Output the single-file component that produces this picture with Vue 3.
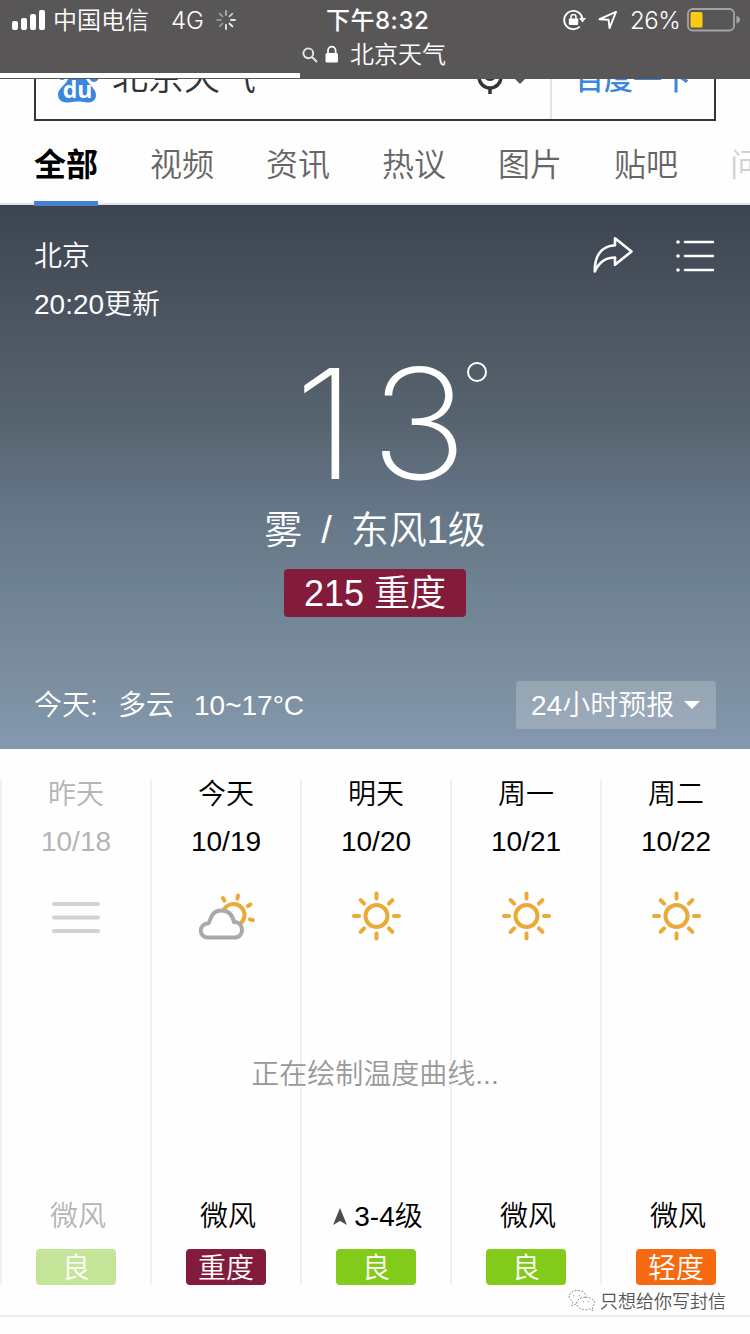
<template>
  <div class="page">
    <header class="chrome">
      <div class="status">
        <svg class="signal" viewBox="0 0 34 22">
          <rect x="0" y="12" width="6" height="9" rx="2" />
          <rect x="9" y="9" width="6" height="12" rx="2" />
          <rect x="18" y="5" width="6" height="16" rx="2" />
          <rect x="27" y="1" width="6" height="20" rx="2" />
        </svg>
        <span class="carrier">中国电信</span>
        <span class="network">4G</span>
        <svg class="spinner" viewBox="-11 -11 22 22">
          <line
            v-for="(o, i) in spokes"
            :key="i"
            x1="0" y1="-5" x2="0" y2="-9"
            :transform="'rotate(' + i * 45 + ')'"
            :stroke-opacity="o"
          />
        </svg>
        <span class="clock">下午8:32</span>
        <svg class="rotation" viewBox="0 0 24 24">
          <path d="M17.8 18.6A9.2 9.2 0 1 1 20.4 10.5" fill="none" stroke="#fff" stroke-width="1.8" />
          <path d="M17 10h7l-3.5 4.5z" fill="#fff" />
          <rect x="6.8" y="10.5" width="9.4" height="6.5" rx="1" fill="#fff" />
          <path d="M9 11V9a2.5 2.5 0 0 1 5 0v2" fill="none" stroke="#fff" stroke-width="1.5" />
        </svg>
        <svg class="location" viewBox="0 0 20 20">
          <path d="M1.5 9.2L18 1.8 11.5 18.2 10.6 9.8z" fill="none" stroke="#fff" stroke-width="1.9" stroke-linejoin="round" />
        </svg>
        <span class="percent">26%</span>
        <svg class="battery" viewBox="0 0 54 24">
          <rect x="1" y="1" width="46" height="21.5" rx="4.5" fill="none" stroke="#a5a4a5" stroke-width="1.8" />
          <rect x="3.5" y="4" width="12" height="15.5" rx="1.5" fill="#fbcb12" />
          <path d="M49.5 8q3.5 1 3.5 3.8t-3.5 3.8z" fill="#a5a4a5" />
        </svg>
      </div>
      <div class="address">
        <svg class="glass" viewBox="0 0 16 16">
          <circle cx="6.3" cy="6.3" r="4.9" />
          <path d="M10 10l5 5" />
        </svg>
        <svg class="lock" viewBox="0 0 14 18">
          <rect x="0.5" y="8" width="12.5" height="9.5" rx="1.5" fill="#fff" />
          <path d="M3 9V5.5a3.8 3.8 0 0 1 7.6 0V9" fill="none" stroke="#fff" stroke-width="1.7" />
        </svg>
        <span>北京天气</span>
      </div>
      <div class="progress"></div>
    </header>

    <div class="search-clip">
      <div class="search">
        <svg class="paw" viewBox="0 0 44 44">
          <ellipse cx="5" cy="14" rx="4.6" ry="6" />
          <ellipse cx="15" cy="7" rx="4.6" ry="6.5" />
          <ellipse cx="27" cy="7" rx="4.6" ry="6.5" />
          <ellipse cx="37" cy="16" rx="5" ry="6" />
          <path d="M20 11c6 0 8 7 11 11s8 8 8 13-4 8-9 7.5-6-1-10-1-5 1-9 1-10-1-10-8c0-5 5-8 8-12s5-11.500 11-11.500z" />
          <text x="20.5" y="38">du</text>
        </svg>
        <span class="query">北京天气</span>
        <svg class="mic" viewBox="0 0 52 40">
          <rect x="9" y="-4" width="14" height="25" rx="7" fill="#333539" />
          <path d="M5 15v2a11 11 0 0 0 22 0v-2" fill="none" stroke="#333539" stroke-width="3.5" />
          <path d="M16 28v6" stroke="#333539" stroke-width="3.5" />
          <path d="M37 15h18l-9 9z" fill="#555" />
        </svg>
        <div class="submit">百度一下</div>
      </div>
    </div>

    <nav class="tabs">
      <span v-for="(t, i) in tabs" :key="t" class="tab" :class="{ active: i === 0, faded: i === 6 }">{{ t }}</span>
    </nav>

    <section class="now">
      <div class="now-head">
        <div class="place">
          <div>北京</div>
          <div>20:20更新</div>
        </div>
        <svg class="share" viewBox="0 0 40 38">
          <path d="M22 2.2L38.5 15.5 22 28.8V21.5C12 21.5 6 26 1.8 35.5 1.5 19 9 10 22 9.2z" />
        </svg>
        <svg class="list" viewBox="0 0 38 34">
          <g v-for="y in [3, 17, 31]" :key="y">
            <circle cx="2" :cy="y" r="1.8" fill="#fff" />
            <path :d="'M9 ' + y + 'H37'" stroke="#fff" stroke-width="2.6" stroke-linecap="round" />
          </g>
        </svg>
      </div>
      <div class="temp"><span class="digits">13</span><i class="degree"></i></div>
      <div class="condition"><span>雾</span><span>/</span><span>东风1级</span></div>
      <div class="aqi">215 重度</div>
      <div class="today">
        <span class="label">今天:</span>
        <span class="sky">多云</span>
        <span>10~17°C</span>
        <div class="hourly">24小时预报<i class="caret"></i></div>
      </div>
    </section>

    <section class="forecast">
      <div v-for="d in days" :key="d.date" class="day" :class="{ past: d.past }">
        <div class="name">{{ d.name }}</div>
        <div class="date">{{ d.date }}</div>
        <svg v-if="d.icon === 'fog'" class="icon" viewBox="-30 -30 60 60">
          <path d="M-22 -13H22M-22 0.5H22M-22 14H22" stroke="#d2d1d3" stroke-width="4" stroke-linecap="round" />
        </svg>
        <svg v-else-if="d.icon === 'cloudy'" class="icon" viewBox="-30 -30 60 60">
          <g transform="translate(7.5 -2) rotate(13)" stroke="#eba937" stroke-width="4" stroke-linecap="round" fill="none">
            <circle r="11" />
            <path v-for="a in [-45, 0, 45, 92]" :key="a" d="M0 -17V-20" :transform="'rotate(' + a + ')'" />
          </g>
          <path d="M-18.500 20.500a7 7 0 0 1 0.500 -14C-15.500 6 -16 -6.500 -5 -6.500 2 -6.500 6.500 -2 8 5 18.500 5 18.500 20.500 9 20.500z" fill="#fff" stroke="#a9a8ac" stroke-width="4" stroke-linejoin="round" />
        </svg>
        <svg v-else class="icon" viewBox="-30 -30 60 60">
          <g stroke="#eba937" stroke-width="4" stroke-linecap="round" fill="none">
            <circle cx="0.5" cy="-1" r="11" />
            <path v-for="n in 8" :key="n" d="M0 -17.5V-22.5" :transform="'translate(0.5 -1) rotate(' + n * 45 + ')'" />
          </g>
        </svg>
        <div class="wind">
          <svg v-if="d.arrow" class="arrow" viewBox="0 0 14 17"><path d="M7 0l7 17-7-4-7 4z" fill="#4c4c4e" /></svg>
          {{ d.wind }}
        </div>
        <div class="badge" :class="d.level">{{ d.quality }}</div>
      </div>
      <div class="drawing">正在绘制温度曲线...</div>
    </section>

    <footer class="foot">
      <div class="watermark">
        <svg viewBox="0 0 30 26">
          <path d="M9 15l-4 2 1-4C-2 7 4 1 11 1c5 0 8 3 9 6" />
          <path d="M19 8c-12 0-12 13 0 13 2 0 3 0 4-1l4 2-1-4c6-5 0-10-7-10z" />
          <path d="M7 6v1M13 6v1M17 12v1M22 12v1" />
        </svg>
        <span>只想给你写封信</span>
      </div>
    </footer>
  </div>
</template>

<script setup>
const spokes = [0.55, 0.7, 0.85, 1, 0.9, 0.4, 0.35, 0.45]

const tabs = ['全部', '视频', '资讯', '热议', '图片', '贴吧', '问答']

const days = [
  { name: '昨天', date: '10/18', icon: 'fog', wind: '微风', quality: '良', level: 'good', past: true },
  { name: '今天', date: '10/19', icon: 'cloudy', wind: '微风', quality: '重度', level: 'heavy' },
  { name: '明天', date: '10/20', icon: 'sunny', wind: '3-4级', arrow: true, quality: '良', level: 'good' },
  { name: '周一', date: '10/21', icon: 'sunny', wind: '微风', quality: '良', level: 'good' },
  { name: '周二', date: '10/22', icon: 'sunny', wind: '微风', quality: '轻度', level: 'light' }
]
</script>

<style>
body { margin: 0; background: #fff; }
</style>

<style scoped>
.page { width: 750px; height: 1334px; overflow: hidden; background: #fefefe; font-family: "Liberation Sans", "Noto Sans CJK SC", sans-serif; font-weight: 350; color: #000; }
.page svg { display: block; flex-shrink: 0; }

.chrome { height: 79px; background: #585657; color: #fff; font-family: Inter, "Noto Sans CJK SC", sans-serif; display: flex; flex-direction: column; }
.status { height: 40px; display: flex; align-items: center; font-size: 24px; line-height: 40px; padding-left: 12px; box-sizing: border-box; white-space: nowrap; }
.status span { padding-top: 2px; }
.signal { width: 34px; height: 22px; fill: #fff; }
.carrier { margin-left: 7px; width: 118px; }
.network { width: 44px; }
.spinner { width: 22px; height: 22px; stroke: #fff; stroke-width: 1.8; stroke-linecap: round; }
.clock { margin-left: 89px; width: 236px; font-weight: 500; letter-spacing: 0.5px; }
.rotation { width: 24px; height: 24px; }
.location { width: 20px; height: 20px; margin-left: 12px; }
.percent { margin-left: 12px; width: 57px; letter-spacing: -0.4px; }
.battery { width: 54px; height: 24px; }
.address { height: 29px; padding-bottom: 4px; display: flex; align-items: center; padding-left: 302px; font-size: 24px; line-height: 28px; }
.address span { margin-left: 11px; }
.glass { width: 16px; height: 16px; fill: none; stroke: #e8e8e8; stroke-width: 1.9; }
.lock { width: 14px; height: 18px; margin-left: 7px; margin-top: -2px; }
.progress { width: 300px; height: 5px; background: #fff; }

.search-clip { height: 42px; padding: 0 34px; display: flex; align-items: flex-end; overflow: hidden; }
.search { flex: 1; height: 82px; box-sizing: border-box; border: 2px solid #333539; display: flex; align-items: center; }
.paw { width: 44px; height: 44px; margin: 4px 0 0 21px; fill: #3a86e0; }
.paw text { fill: #fff; font: bold 23px "Open Sans", sans-serif; text-anchor: middle; }
.query { margin: 0 0 12px 11px; width: 362px; font-size: 36px; color: #333; }
.mic { width: 52px; height: 40px; }
.submit { margin-left: auto; width: 164px; height: 78px; line-height: 79px; box-sizing: border-box; border-left: 2px solid #e4e4e6; text-align: center; font-size: 29px; font-weight: 500; color: #3a86e0; }

.tabs { height: 84px; box-sizing: border-box; padding-left: 34px; border-bottom: 2px solid #e1e3e8; display: flex; gap: 52px; }
.tab { flex-shrink: 0; width: 64px; height: 80px; line-height: 88px; font-size: 32px; color: #666; }
.tab.active { position: relative; color: #000; font-weight: 700; border-bottom: 5px solid #4583cb; }
.tab.faded { color: #d0d0d0; }

.now { height: 544px; box-sizing: border-box; padding: 28px 34px 0; background: linear-gradient(#3c4451, #49515d 16%, #57646f 40%, #647486 54%, #6f8291 70%, #7b8d9e 86%, #8499af); color: #fff; font-size: 28px; }
.now-head { height: 95px; display: flex; align-items: flex-start; }
.place { flex: 1; line-height: 48px; }
.share { width: 40px; height: 38px; margin-top: 3px; fill: none; stroke: #fff; stroke-width: 2.6; stroke-linejoin: round; }
.list { width: 38px; height: 34px; margin: 6px 2px 0 43px; }
.temp { height: 174px; line-height: 191px; display: flex; font-family: Inter, sans-serif; font-size: 153px; font-weight: 200; padding-left: 260px; }
.digits { letter-spacing: 13px; transform: scaleX(1.07); transform-origin: left; }
.degree { width: 16px; height: 16px; border: 2.5px solid #fff; border-radius: 50%; margin: 34px 0 0 -2px; }
.condition { height: 66px; line-height: 56px; display: flex; justify-content: center; gap: 19px; font-size: 38px; }
.aqi { width: 182px; height: 48px; line-height: 50px; margin: 1px auto 0; border-radius: 4px; background: #831c3b; text-align: center; font-size: 36px; }
.today { height: 48px; margin-top: 64px; display: flex; align-items: center; line-height: 51px; }
.label { width: 84px; }
.sky { width: 76px; }
.hourly { margin-left: auto; width: 200px; height: 48px; box-sizing: border-box; padding-left: 15px; border-radius: 3px; background: rgba(255, 255, 255, 0.2); display: flex; align-items: center; }
.caret { margin-left: 10px; border: 8px solid transparent; border-top-color: #fff; border-bottom: 0; }

.forecast { position: relative; height: 568px; box-sizing: border-box; padding-top: 30px; border-bottom: 2px solid #ececee; display: grid; grid-template-columns: repeat(5, 150px); }
.day { height: 506px; box-sizing: border-box; border-left: 2px solid #f1f1f2; display: flex; flex-direction: column; align-items: center; font-size: 28px; line-height: 48px; }
.name { margin-top: -8px; }
.date { margin-top: -1px; }
.icon { width: 60px; height: 60px; margin-top: 21px; }
.wind { margin: 246px 0 8px 4px; display: flex; align-items: center; gap: 7px; }
.arrow { width: 14px; height: 17px; margin-top: -2px; }
.badge { width: 80px; height: 36px; line-height: 40px; border-radius: 4px; text-align: center; color: #fff; }
.past { color: #b5b4b7; }
.good { background: #83cb1a; }
.past .good { background: #c4e497; }
.heavy { background: #831c3b; }
.light { background: #f56a10; }
.drawing { position: absolute; left: 0; right: 0; top: 302px; line-height: 48px; text-align: center; font-size: 28px; color: #999; }

.foot { position: relative; }
.watermark { position: absolute; left: 567px; top: -30px; display: flex; align-items: center; gap: 4px; font-size: 18px; line-height: 30px; color: #555; text-shadow: -1px -1px 0 #fff; }
.watermark svg { width: 29px; height: 26px; fill: #fff; stroke: #888; stroke-width: 1; stroke-dasharray: 2 1.5; }
</style>
